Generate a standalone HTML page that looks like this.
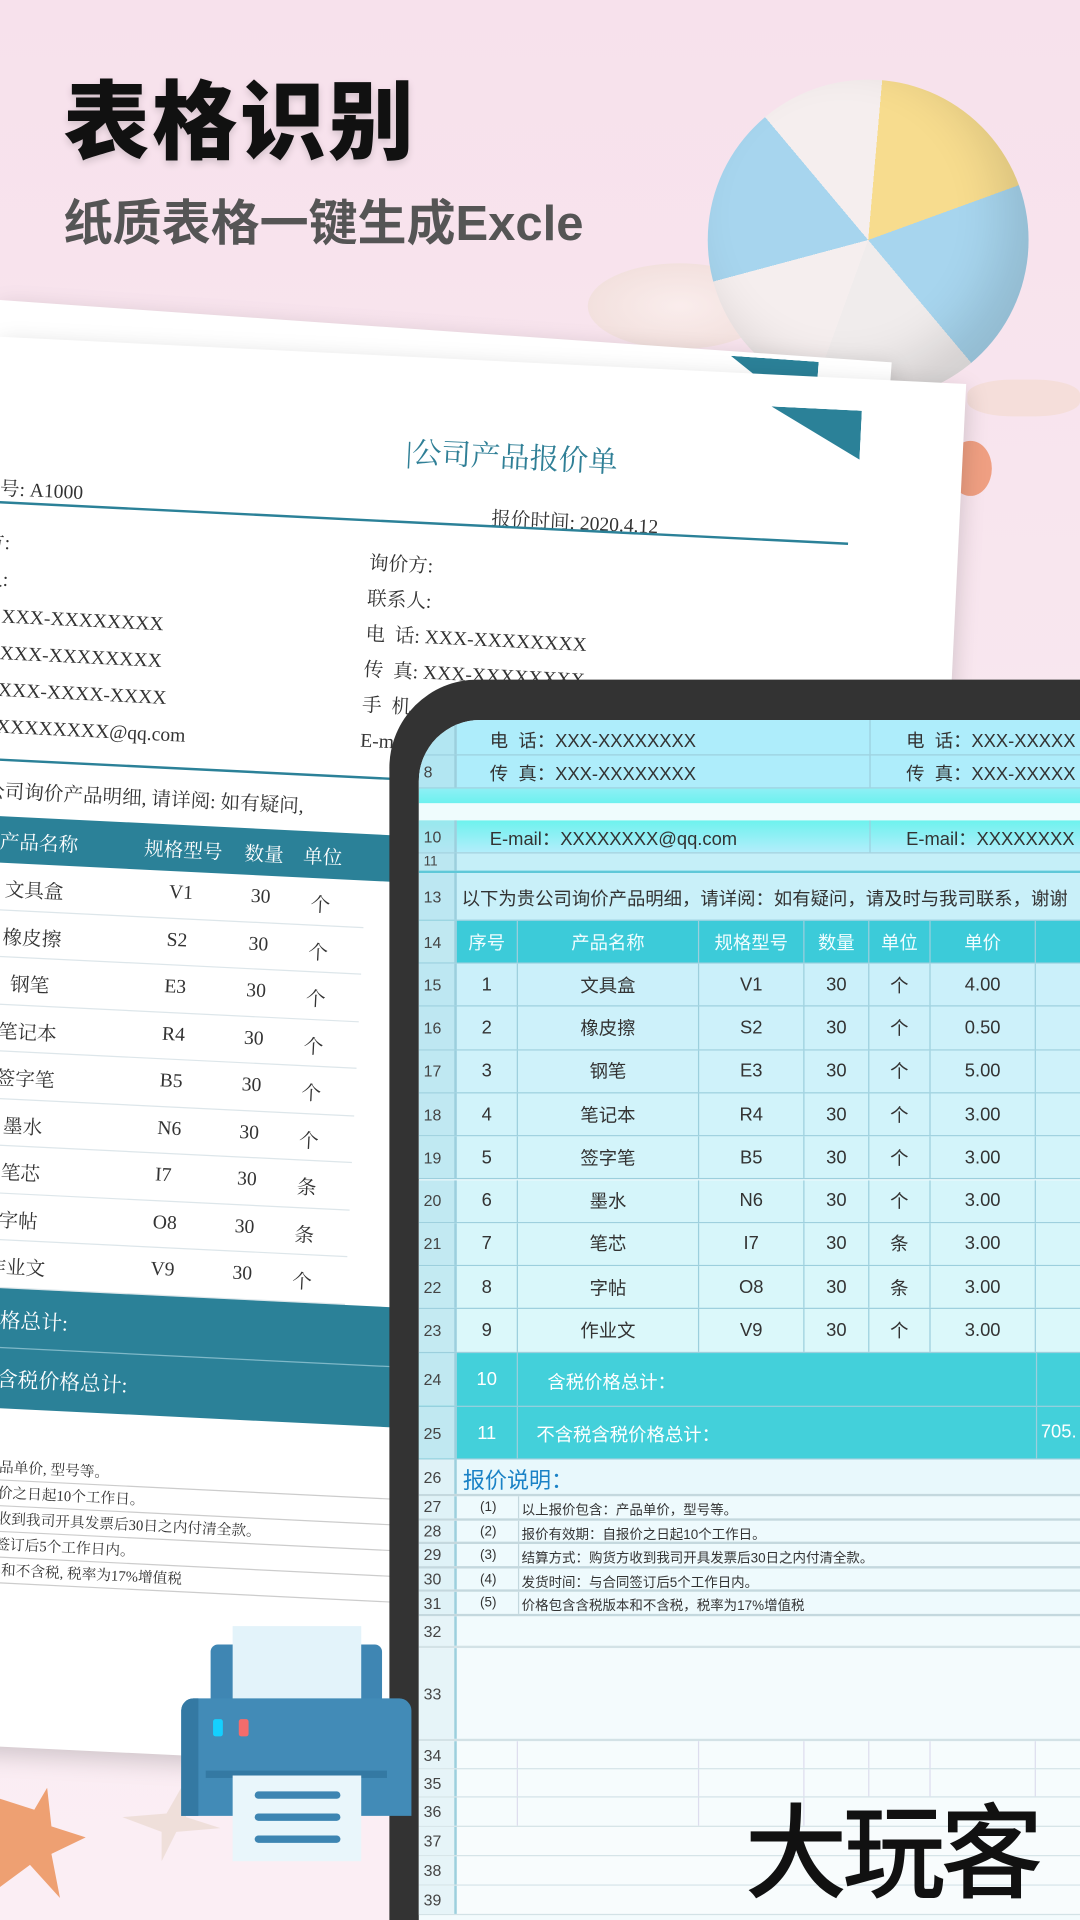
<!DOCTYPE html>
<html><head><meta charset="utf-8">
<style>
*{margin:0;padding:0;box-sizing:border-box}
html,body{width:1080px;height:1920px;overflow:hidden}
body{background:#f8e6ee;position:relative}
#s{position:absolute;left:0;top:0;width:882px;height:1568px;transform:scale(1.22449);transform-origin:0 0;overflow:hidden;
background:linear-gradient(180deg,#f7e1ec 0%,#f9e9f0 50%,#fbeef4 100%);font-family:"Liberation Sans","Noto Sans CJK SC",sans-serif}
.abs{position:absolute}
.h1{left:52px;top:44px;font-size:70px;font-weight:900;color:#111;letter-spacing:2px;font-family:"Noto Sans CJK SC",sans-serif;text-shadow:0 3px 6px rgba(0,0,0,.15)}
.h2{left:52px;top:150px;font-size:40px;font-weight:700;color:#555;font-family:"Liberation Sans","Noto Sans CJK SC",sans-serif}
.ball{left:578px;top:65px;width:262px;height:262px;border-radius:50%;
background:conic-gradient(from 200deg,#f5eeee 0 55deg,#a7d5ee 55deg 120deg,#f5eeee 120deg 165deg,#f7dc8e 165deg 230deg,#a7d5ee 230deg 300deg,#f0ecec 300deg 360deg);
box-shadow:inset -20px -20px 40px rgba(0,0,0,.12)}
.paper{background:#fff;box-shadow:0 6px 20px rgba(0,0,0,.18);transform-origin:0 0}
.serif{font-family:"Liberation Serif","Noto Serif CJK SC",serif;color:#333}
.tab{left:318px;top:555px;width:600px;height:1013px;background:#333;border-radius:72px 0 0 0}
.scr{left:342px;top:588px;width:540px;height:980px;border-radius:50px 0 0 0;overflow:hidden;background:#f3fbfd}
.r{position:absolute;left:0;width:560px;border-bottom:1px solid #9ccfdd;font-size:14px;color:#333}
.rh{position:absolute;left:0;top:0;bottom:0;width:31px;border-right:2px solid #9ccfdd;background:rgba(180,225,236,.6);font-size:13px;color:#444;padding-left:4px;display:flex;align-items:center}
.c{position:absolute;top:0;bottom:0;display:flex;align-items:center;justify-content:center;border-right:1px solid #9ccfdd}
</style></head><body>
<div id="s">
<div class="abs h1">表格识别</div>
<div class="abs h2">纸质表格一键生成Excle</div>
<div class="abs" style="left:480px;top:215px;width:150px;height:70px;border-radius:50%;background:radial-gradient(#fbf1ec,#ecd8cf);opacity:.7"></div>
<div class="abs ball"></div>
<div class="abs" style="left:790px;top:310px;width:92px;height:30px;background:#f3dcd2;border-radius:40%;opacity:.7"></div>
<div class="abs" style="left:775px;top:360px;width:35px;height:45px;background:#ec8d66;border-radius:50%;opacity:.8"></div>
<!-- back paper -->
<div class="abs paper" style="left:0;top:245px;width:730px;height:400px;transform:rotate(4deg)"></div>
<div class="abs" style="left:596px;top:293px;width:72px;height:20px;background:#2b8198;transform:rotate(4deg);clip-path:polygon(0 0,100% 0,100% 100%,40% 100%)"></div>
<!-- main paper -->
<div class="abs paper serif" style="left:0;top:275px;width:790px;height:1150px;transform:rotate(2.8deg)">
<div class="abs" style="left:20px;top:0;width:10px;height:10px">
 <div class="abs" style="left:316px;top:58px;font-size:24px;color:#2f7f96;white-space:nowrap">|公司产品报价单</div>
 <div class="abs" style="left:612px;top:26px;width:74px;height:40px;background:#2b8198;clip-path:polygon(0 0,100% 0,100% 100%)"></div>
 <div class="abs" style="left:-30px;top:111px;font-size:16px;white-space:nowrap">单号: A1000</div>
 <div class="abs" style="left:388px;top:116px;font-size:16px;white-space:nowrap">报价时间: 2020.4.12</div>
 <div class="abs" style="left:-40px;top:134px;width:720px;height:2px;background:#2b8198"></div>
 <div class="abs" style="left:-40px;top:154px;font-size:16px;line-height:30px;white-space:nowrap">价方:<br>系人:<br>&nbsp;&nbsp;话: XXX-XXXXXXXX<br>&nbsp;&nbsp;真: XXX-XXXXXXXX<br>&nbsp;&nbsp;机: XXX-XXXX-XXXX<br>nail: XXXXXXXX@qq.com</div>
 <div class="abs" style="left:290px;top:156px;font-size:16px;line-height:29px;white-space:nowrap">询价方:<br>联系人:<br>电&nbsp;&nbsp;话: XXX-XXXXXXXX<br>传&nbsp;&nbsp;真: XXX-XXXXXXXX<br>手&nbsp;&nbsp;机<br>E-m</div>
 <div class="abs" style="left:-40px;top:344px;width:720px;height:2px;background:#2b8198"></div>
 <div class="abs" style="left:-30px;top:358px;font-size:16px;white-space:nowrap">贵公司询价产品明细, 请详阅: 如有疑问,</div>
 <div class="abs" style="left:-40px;top:391px;width:380px;height:38px;background:#2b8198;color:#fff;font-size:16px">
  <span class="abs" style="left:40px;top:8px">产品名称</span><span class="abs" style="left:158px;top:8px">规格型号</span><span class="abs" style="left:240px;top:8px">数量</span><span class="abs" style="left:288px;top:8px">单位</span></div>
 <div class="abs" style="left:-40px;top:429px;width:340px;font-size:16px">
  <div style="position:relative;height:38.5px;border-bottom:1px solid #dde6ea"><span class="abs" style="left:46px;top:9px">文具盒</span><span class="abs" style="left:180px;top:9px">V1</span><span class="abs" style="left:247px;top:9px">30</span><span class="abs" style="left:296px;top:9px">个</span></div>
  <div style="position:relative;height:38.5px;border-bottom:1px solid #dde6ea"><span class="abs" style="left:46px;top:9px">橡皮擦</span><span class="abs" style="left:180px;top:9px">S2</span><span class="abs" style="left:247px;top:9px">30</span><span class="abs" style="left:296px;top:9px">个</span></div>
  <div style="position:relative;height:38.5px;border-bottom:1px solid #dde6ea"><span class="abs" style="left:54px;top:9px">钢笔</span><span class="abs" style="left:180px;top:9px">E3</span><span class="abs" style="left:247px;top:9px">30</span><span class="abs" style="left:296px;top:9px">个</span></div>
  <div style="position:relative;height:38.5px;border-bottom:1px solid #dde6ea"><span class="abs" style="left:46px;top:9px">笔记本</span><span class="abs" style="left:180px;top:9px">R4</span><span class="abs" style="left:247px;top:9px">30</span><span class="abs" style="left:296px;top:9px">个</span></div>
  <div style="position:relative;height:38.5px;border-bottom:1px solid #dde6ea"><span class="abs" style="left:46px;top:9px">签字笔</span><span class="abs" style="left:180px;top:9px">B5</span><span class="abs" style="left:247px;top:9px">30</span><span class="abs" style="left:296px;top:9px">个</span></div>
  <div style="position:relative;height:38.5px;border-bottom:1px solid #dde6ea"><span class="abs" style="left:54px;top:9px">墨水</span><span class="abs" style="left:180px;top:9px">N6</span><span class="abs" style="left:247px;top:9px">30</span><span class="abs" style="left:296px;top:9px">个</span></div>
  <div style="position:relative;height:38.5px;border-bottom:1px solid #dde6ea"><span class="abs" style="left:54px;top:9px">笔芯</span><span class="abs" style="left:180px;top:9px">I7</span><span class="abs" style="left:247px;top:9px">30</span><span class="abs" style="left:296px;top:9px">条</span></div>
  <div style="position:relative;height:38.5px;border-bottom:1px solid #dde6ea"><span class="abs" style="left:54px;top:9px">字帖</span><span class="abs" style="left:180px;top:9px">O8</span><span class="abs" style="left:247px;top:9px">30</span><span class="abs" style="left:296px;top:9px">条</span></div>
  <div style="position:relative;height:38.5px;border-bottom:1px solid #dde6ea"><span class="abs" style="left:46px;top:9px">作业文</span><span class="abs" style="left:180px;top:9px">V9</span><span class="abs" style="left:247px;top:9px">30</span><span class="abs" style="left:296px;top:9px">个</span></div>
 </div>
 <div class="abs" style="left:-40px;top:776px;width:740px;height:98px;background:#2b8198;color:#fff;font-size:17px">
  <span class="abs" style="left:8px;top:12px">含税价格总计:</span><div class="abs" style="left:0;top:48px;width:740px;height:1px;background:#7fb8c8"></div><span class="abs" style="left:8px;top:60px">不含税含税价格总计:</span></div>
 <div class="abs" style="left:-30px;top:882px;font-size:20px;color:#2a86c8">明:</div>
 <div class="abs" style="left:-30px;top:912px;font-size:12px;line-height:20px;width:720px">
  <div style="border-bottom:1px solid #ccc">价包含: 产品单价, 型号等。</div>
  <div style="border-bottom:1px solid #ccc">效期: 自报价之日起10个工作日。</div>
  <div style="border-bottom:1px solid #ccc">式: 购货方收到我司开具发票后30日之内付清全款。</div>
  <div style="border-bottom:1px solid #ccc">间: 与合同签订后5个工作日内。</div>
  <div style="border-bottom:1px solid #ccc">含含税版本和不含税, 税率为17%增值税</div>
 </div>
</div>
</div>
<!-- starfish -->
<div class="abs" style="left:0;top:1460px;width:70px;height:90px;background:#eea072;clip-path:polygon(0 10%,40% 20%,55% 0,60% 35%,100% 45%,60% 60%,70% 100%,35% 70%,0 90%)"></div>
<div class="abs" style="left:100px;top:1460px;width:80px;height:60px;background:#e9d9cf;opacity:.7;clip-path:polygon(0 40%,45% 35%,60% 0,65% 40%,100% 55%,55% 60%,40% 100%,40% 60%)"></div>
<!-- tablet -->
<div class="abs tab"></div>
<div class="abs scr">
 <div class="r" style="top:0;height:29px;background:#aeedfb;font-size:15px"><div class="rh"></div><span class="abs" style="left:58px;top:6px">电&nbsp;&nbsp;话：XXX-XXXXXXXX</span><div class="abs" style="left:368px;top:0;bottom:0;border-left:1px solid #9ccfdd"></div><span class="abs" style="left:398px;top:6px">电&nbsp;&nbsp;话：XXX-XXXXX</span></div>
 <div class="r" style="top:29px;height:27px;background:#aeedfb;font-size:15px"><div class="rh">8</div><span class="abs" style="left:58px;top:4px">传&nbsp;&nbsp;真：XXX-XXXXXXXX</span><div class="abs" style="left:368px;top:0;bottom:0;border-left:1px solid #9ccfdd"></div><span class="abs" style="left:398px;top:4px">传&nbsp;&nbsp;真：XXX-XXXXX</span></div>
 <div class="r" style="top:56px;height:12px;background:linear-gradient(#8ef0f5,#6cf1ef);border:0"></div>
 <div class="r" style="top:68px;height:14px;background:#effcfd;border:0"></div>
 <div class="r" style="top:82px;height:27px;background:linear-gradient(#6ef2ee,#b2eefb);font-size:15px"><div class="rh">10</div><span class="abs" style="left:58px;top:4px">E-mail：XXXXXXXX@qq.com</span><div class="abs" style="left:368px;top:0;bottom:0;border-left:1px solid #9ccfdd"></div><span class="abs" style="left:398px;top:4px">E-mail：XXXXXXXX</span></div>
 <div class="r" style="top:109px;height:16px;background:#c5eff8;border-bottom:2px solid #5fc8d8"><div class="rh" style="font-size:11px">11</div></div>
 <div class="r" style="top:125px;height:39px;background:#c9f0f9;font-size:15px"><div class="rh">13</div><span class="abs" style="left:35px;top:10px;white-space:nowrap">以下为贵公司询价产品明细，请详阅：如有疑问，请及时与我司联系，谢谢</span></div>
 <div class="r" style="top:164px;height:35px;background:#3ccbd9;color:#f0fdff;font-size:15px"><div class="rh" style="background:#c0e8f1">14</div>
  <div class="c" style="left:31px;width:50px">序号</div><div class="c" style="left:81px;width:148px">产品名称</div><div class="c" style="left:229px;width:86px">规格型号</div><div class="c" style="left:315px;width:53px">数量</div><div class="c" style="left:368px;width:50px">单位</div><div class="c" style="left:418px;width:86px">单价</div></div>
 <div id="rows"></div>
 <div class="r" style="top:517px;height:44px;background:#43d0da;color:#fff;font-size:15px"><div class="rh" style="background:#c0e8f1">24</div><div class="c" style="left:31px;width:50px">10</div><span class="abs" style="left:105px;top:13px">含税价格总计：</span><div class="abs" style="left:504px;top:0;bottom:0;border-left:1px solid #9ccfdd"></div></div>
 <div class="r" style="top:561px;height:43px;background:#43d0da;color:#fff;font-size:15px"><div class="rh" style="background:#c0e8f1">25</div><div class="c" style="left:31px;width:50px">11</div><span class="abs" style="left:96px;top:12px">不含税含税价格总计：</span><div class="abs" style="left:504px;top:0;bottom:0;border-left:1px solid #9ccfdd"></div><span class="abs" style="left:508px;top:12px">705.</span></div>
 <div class="r" style="top:604px;height:30px;background:#e8f8fc;border-bottom:2px solid #c4d8de"><div class="rh" style="background:#dff2f7">26</div><span class="abs" style="left:36px;top:3px;font-size:18px;color:#1a82c6">报价说明：</span></div>
 <div class="r" style="top:634px;height:19.5px;background:#eefafd;font-size:11px;border-bottom:2px solid #c4d8de"><div class="rh" style="background:#dff2f7">27</div><span class="abs" style="left:50px;top:3px">(1)</span><div class="abs" style="left:81px;top:0;bottom:0;border-left:1px solid #c4d8de"></div><span class="abs" style="left:84px;top:3px">以上报价包含：产品单价，型号等。</span></div>
 <div class="r" style="top:653.5px;height:19.5px;background:#eefafd;font-size:11px;border-bottom:2px solid #c4d8de"><div class="rh" style="background:#dff2f7">28</div><span class="abs" style="left:50px;top:3px">(2)</span><div class="abs" style="left:81px;top:0;bottom:0;border-left:1px solid #c4d8de"></div><span class="abs" style="left:84px;top:3px">报价有效期：自报价之日起10个工作日。</span></div>
 <div class="r" style="top:673px;height:19.5px;background:#eefafd;font-size:11px;border-bottom:2px solid #c4d8de"><div class="rh" style="background:#dff2f7">29</div><span class="abs" style="left:50px;top:3px">(3)</span><div class="abs" style="left:81px;top:0;bottom:0;border-left:1px solid #c4d8de"></div><span class="abs" style="left:84px;top:3px">结算方式：购货方收到我司开具发票后30日之内付清全款。</span></div>
 <div class="r" style="top:692.5px;height:19.5px;background:#eefafd;font-size:11px;border-bottom:2px solid #c4d8de"><div class="rh" style="background:#dff2f7">30</div><span class="abs" style="left:50px;top:3px">(4)</span><div class="abs" style="left:81px;top:0;bottom:0;border-left:1px solid #c4d8de"></div><span class="abs" style="left:84px;top:3px">发货时间：与合同签订后5个工作日内。</span></div>
 <div class="r" style="top:712px;height:20px;background:#eefafd;font-size:11px;border-bottom:2px solid #c4d8de"><div class="rh" style="background:#dff2f7">31</div><span class="abs" style="left:50px;top:3px">(5)</span><div class="abs" style="left:81px;top:0;bottom:0;border-left:1px solid #c4d8de"></div><span class="abs" style="left:84px;top:3px">价格包含含税版本和不含税，税率为17%增值税</span></div>
 <div class="r" style="top:732px;height:26px;background:#f2fbfd;border-bottom:2px solid #d3e2e6"><div class="rh" style="background:#e6f4f8">32</div></div>
 <div class="r" style="top:758px;height:76px;background:#f4fbfd;border-bottom:2px solid #d3e2e6"><div class="rh" style="background:#e6f4f8">33</div></div>
 <div class="r" style="top:834px;height:23px;background:#f6fcfd;border-bottom:1px solid #d3e2e6"><div class="rh" style="background:#e6f4f8">34</div><div class="c" style="left:31px;width:50px;border-color:#dde"></div><div class="c" style="left:81px;width:148px;border-color:#dde"></div><div class="c" style="left:229px;width:86px;border-color:#dde"></div><div class="c" style="left:315px;width:53px;border-color:#dde"></div><div class="c" style="left:368px;width:50px;border-color:#dde"></div><div class="c" style="left:418px;width:86px;border-color:#dde"></div></div>
 <div class="r" style="top:857px;height:23px;background:#f6fcfd;border-bottom:1px solid #d3e2e6"><div class="rh" style="background:#e6f4f8">35</div><div class="c" style="left:31px;width:50px;border-color:#dde"></div><div class="c" style="left:81px;width:148px;border-color:#dde"></div><div class="c" style="left:229px;width:86px;border-color:#dde"></div><div class="c" style="left:315px;width:53px;border-color:#dde"></div><div class="c" style="left:368px;width:50px;border-color:#dde"></div><div class="c" style="left:418px;width:86px;border-color:#dde"></div></div>
 <div class="r" style="top:880px;height:24px;background:#f6fcfd;border-bottom:1px solid #d3e2e6"><div class="rh" style="background:#e6f4f8">36</div><div class="c" style="left:31px;width:50px;border-color:#dde"></div><div class="c" style="left:81px;width:148px;border-color:#dde"></div><div class="c" style="left:229px;width:86px;border-color:#dde"></div></div>
 <div class="r" style="top:904px;height:24px;background:#f8fcfd;border-bottom:1px solid #d3e2e6"><div class="rh" style="background:#e6f4f8">37</div></div>
 <div class="r" style="top:928px;height:24px;background:#f8fcfd;border-bottom:1px solid #d3e2e6"><div class="rh" style="background:#e6f4f8">38</div></div>
 <div class="r" style="top:952px;height:24px;background:#f8fcfd;border-bottom:1px solid #d3e2e6"><div class="rh" style="background:#e6f4f8">39</div></div>
</div>
<!-- printer -->
<div class="abs" style="left:172px;top:1343px;width:140px;height:52px;background:#3f86b3;border-radius:6px 6px 0 0"></div>
<div class="abs" style="left:190px;top:1328px;width:105px;height:70px;background:#e3f3fa"></div>
<div class="abs" style="left:148px;top:1387px;width:188px;height:96px;background:#428bb7;border-radius:10px 10px 0 0"></div>
<div class="abs" style="left:148px;top:1387px;width:14px;height:96px;background:#3479a3;border-radius:10px 0 0 0"></div>
<div class="abs" style="left:174px;top:1404px;width:8px;height:14px;background:#14d0ff;border-radius:2px"></div>
<div class="abs" style="left:195px;top:1404px;width:8px;height:14px;background:#f46c6c;border-radius:2px"></div>
<div class="abs" style="left:168px;top:1446px;width:148px;height:6px;background:#3479a3"></div>
<div class="abs" style="left:190px;top:1450px;width:105px;height:70px;background:#e9f6fb"></div>
<div class="abs" style="left:208px;top:1463px;width:70px;height:6px;background:#3d85b2;border-radius:3px;box-shadow:0 18px 0 #3d85b2,0 36px 0 #3d85b2"></div>
<div class="abs" style="left:608px;top:1466px;font-size:84px;color:#111;font-family:'Noto Sans CJK SC',sans-serif;font-weight:500;letter-spacing:-4px;line-height:1">大玩客</div>
</div>
<script>
var d=[["1","文具盒","V1","30","个","4.00"],["2","橡皮擦","S2","30","个","0.50"],["3","钢笔","E3","30","个","5.00"],["4","笔记本","R4","30","个","3.00"],["5","签字笔","B5","30","个","3.00"],["6","墨水","N6","30","个","3.00"],["7","笔芯","I7","30","条","3.00"],["8","字帖","O8","30","条","3.00"],["9","作业文","V9","30","个","3.00"]];
var L=[31,81,229,315,368,418,504],W=[50,148,86,53,50,86,60],h="";
d.forEach(function(r,i){var t=199+i*35.3;var g=203+i*2;h+='<div class="r" style="top:'+t+'px;height:35.3px;background:rgb('+g+','+(240+i)+',250);font-size:15px"><div class="rh">'+(15+i)+'</div>';
for(var j=0;j<7;j++)h+='<div class="c" style="left:'+L[j]+'px;width:'+W[j]+'px">'+(r[j]||'')+'</div>';h+='</div>';});
document.getElementById('rows').outerHTML=h;
</script>
</body></html>
